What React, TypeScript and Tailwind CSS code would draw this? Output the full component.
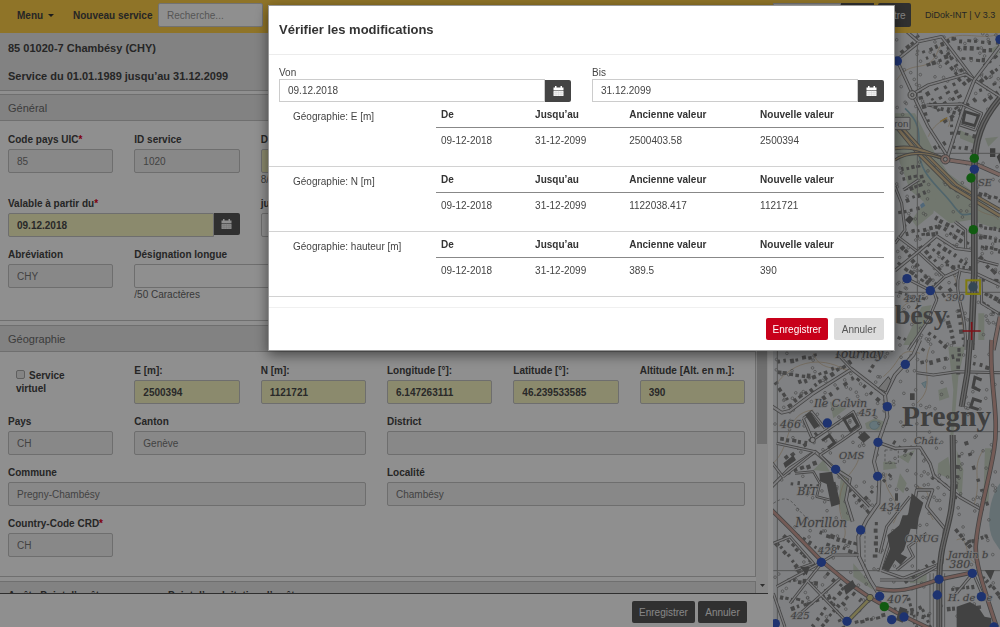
import { useState, type ReactNode } from 'react';

interface FieldProps {
  id: string;
  label: string;
  value?: string;
  required?: boolean;
  tone?: 'readonly' | 'changed' | 'plain';
  bold?: boolean;
  hint?: string;
  className?: string;
}

interface Change {
  name: string;
  from: string;
  to: string;
  oldValue: string;
  newValue: string;
}

const changes: Change[] = [
  { name: 'Géographie: E [m]', from: '09-12-2018', to: '31-12-2099', oldValue: '2500403.58', newValue: '2500394' },
  { name: 'Géographie: N [m]', from: '09-12-2018', to: '31-12-2099', oldValue: '1122038.417', newValue: '1121721' },
  { name: 'Géographie: hauteur [m]', from: '09-12-2018', to: '31-12-2099', oldValue: '389.5', newValue: '390' },
];

const tones = {
  readonly: 'bg-[#f2f2f2] text-[#777]',
  changed: 'bg-[#f8f6c3] text-[#4a4a4a]',
  plain: 'bg-white text-[#555]',
};

function CalendarIcon() {
  return (
    <svg width="11" height="11" viewBox="0 0 11 11" aria-hidden="true">
      <path d="M0.5 1.5H2V0h1.5v1.5h4V0H9v1.5h1.5V4h-10z" fill="#fff" />
      <path d="M0.5 4.6h10V10h-10z" fill="#f4f4f4" />
      <path d="M0.5 6.5h10M0.5 8.3h10M3 4.6V10M5.5 4.6V10M8 4.6V10" stroke="#ccc" strokeWidth="0.4" />
    </svg>
  );
}

function FieldLabel({ id, label, required }: { id: string; label: string; required?: boolean }) {
  return (
    <label htmlFor={id} className="block h-[15px] whitespace-nowrap font-bold leading-[15px] text-[#444]">
      {label}
      {required && <span className="text-[#e2001a]">*</span>}
    </label>
  );
}

function Field({ id, label, value = '', required, tone = 'readonly', bold, hint, className = '' }: FieldProps) {
  return (
    <div className={`min-w-0 ${className}`}>
      <FieldLabel id={id} label={label} required={required} />
      <input
        id={id}
        type="text"
        defaultValue={value}
        readOnly={tone === 'readonly'}
        className={`mt-[2px] block h-6 w-full rounded-xs border border-[#c4c4c4] px-2 outline-none ${tones[tone]} ${bold ? 'font-bold' : ''}`}
      />
      {hint && <p className="h-[13px] whitespace-nowrap leading-[13px] text-[#666]">{hint}</p>}
    </div>
  );
}

function DateField({ id, label, value, required, tone = 'plain', bold, className = '' }: FieldProps) {
  return (
    <div className={`min-w-0 ${className}`}>
      <FieldLabel id={id} label={label} required={required} />
      <div className="mt-[2px] flex items-start">
        <input
          id={id}
          type="text"
          defaultValue={value}
          className={`h-6 min-w-0 flex-1 rounded-l-xs border border-[#c4c4c4] px-2 outline-none ${tones[tone]} ${bold ? 'font-bold' : ''}`}
        />
        <button type="button" aria-label={`Calendrier ${label}`} className="flex h-[22px] w-[26px] items-center justify-center rounded-r-xs bg-[#565656]">
          <CalendarIcon />
        </button>
      </div>
    </div>
  );
}

function Panel({ title, children }: { title: string; children: ReactNode }) {
  return (
    <section className="mb-1 border-y border-r border-[#c6c6c6]">
      <h2 className="h-[26px] border-b border-[#c6c6c6] bg-[#e8e8e8] pl-2 text-[11px] leading-[26px] text-[#6c6c6c]">{title}</h2>
      <div className="grid grid-cols-6 gap-x-[21px] gap-y-[10px] pt-[11px] pr-[10px] pb-[19px] pl-2">{children}</div>
    </section>
  );
}

/* ---------- map ---------- */

// small deterministic generator, so the houses stay in place between renders
function makeRandom(seed: number) {
  let s = seed;
  return () => {
    s = (s * 16807) % 2147483647;
    return s / 2147483647;
  };
}

// x1, y1, x2, y2, number of houses
type HouseRow = [number, number, number, number, number];

const northRows: HouseRow[] = [
  [110, 60, 200, 20, 6], [120, 75, 180, 50, 4], [120, 95, 190, 70, 5], [40, 60, 90, 20, 4], [190, 60, 250, 140, 6],
  [185, 90, 235, 150, 5], [200, 20, 330, 30, 7], [215, 45, 310, 50, 6], [230, 75, 290, 80, 4], [290, 100, 340, 60, 4],
  [280, 150, 340, 100, 5], [105, 175, 130, 260, 5], [130, 180, 160, 230, 4], [155, 170, 190, 230, 4], [180, 160, 215, 220, 4],
  [205, 150, 235, 210, 4], [130, 215, 220, 240, 6], [280, 170, 340, 150, 4], [290, 210, 340, 170, 4], [215, 300, 260, 310, 3],
  [200, 340, 255, 350, 4], [140, 350, 170, 330, 3], [200, 260, 205, 320, 4], [45, 410, 90, 400, 4], [50, 440, 100, 430, 4],
  [55, 470, 110, 450, 5], [60, 500, 110, 480, 4], [35, 540, 90, 530, 4], [60, 600, 145, 580, 6], [150, 555, 230, 600, 6],
  [160, 580, 240, 630, 6], [90, 610, 150, 600, 5], [50, 640, 95, 690, 5], [40, 690, 80, 720, 3], [110, 640, 160, 700, 5],
  [130, 635, 200, 700, 6], [160, 635, 240, 690, 6], [90, 700, 165, 765, 6], [75, 715, 140, 760, 5], [180, 700, 250, 705, 5],
  [280, 580, 340, 590, 5], [280, 610, 340, 620, 5], [285, 640, 340, 650, 5], [285, 670, 330, 720, 5], [300, 780, 340, 800, 4],
  [290, 810, 340, 840, 4], [40, 780, 110, 800, 5], [150, 800, 205, 760, 4], [190, 850, 210, 930, 6], [225, 830, 240, 940, 6],
  [130, 900, 180, 940, 4], [40, 910, 110, 950, 5], [280, 480, 340, 500, 5], [290, 740, 345, 745, 4], [170, 270, 260, 200, 5],
];

const southRows: HouseRow[] = [
  [20, 60, 130, 40, 7], [20, 90, 110, 100, 6], [20, 120, 70, 200, 6], [80, 120, 180, 80, 6], [50, 190, 130, 130, 6],
  [140, 120, 230, 60, 6], [260, 110, 340, 180, 5], [290, 90, 310, 60, 3], [450, 60, 540, 40, 5], [150, 170, 240, 110, 5],
  [30, 290, 100, 300, 5], [40, 350, 130, 280, 6], [140, 370, 60, 400, 5], [60, 420, 140, 430, 5], [240, 440, 290, 500, 5],
  [150, 570, 250, 600, 7], [170, 600, 250, 630, 6], [80, 580, 150, 620, 5], [20, 600, 100, 690, 8], [40, 580, 130, 660, 8],
  [50, 710, 130, 720, 6], [30, 760, 110, 780, 6], [60, 800, 170, 760, 7], [120, 850, 210, 740, 8], [150, 850, 220, 770, 7],
  [170, 690, 270, 770, 6], [170, 740, 220, 850, 6], [320, 540, 320, 640, 6], [370, 800, 470, 820, 7], [420, 770, 440, 850, 6],
  [450, 790, 480, 850, 5], [530, 800, 620, 790, 7], [540, 740, 600, 730, 5], [640, 700, 690, 760, 6], [590, 600, 640, 580, 5],
  [570, 340, 560, 460, 5], [590, 300, 650, 480, 6], [560, 560, 600, 610, 5], [250, 840, 330, 820, 6], [280, 470, 350, 400, 5],
  [370, 300, 420, 330, 4], [490, 400, 540, 440, 4], [400, 720, 480, 660, 5], [610, 60, 645, 70, 3], [570, 20, 570, 90, 5],
];

function Houses({ rows, seed }: { rows: HouseRow[]; seed: number }) {
  const rnd = makeRandom(seed);
  return (
    <g fill="#808080">
      {rows.flatMap(([x1, y1, x2, y2, n], r) => {
        const angle = (Math.atan2(y2 - y1, x2 - x1) * 180) / Math.PI;
        return Array.from({ length: n }, (_, i) => {
          const x = x1 + ((x2 - x1) * i) / (n - 1) + rnd() * 4;
          const y = y1 + ((y2 - y1) * i) / (n - 1) + rnd() * 8;
          const w = 7 + rnd() * 6;
          return <rect key={`${r}-${i}`} x={x} y={y} width={w} height={8 + rnd() * 6} transform={`rotate(${angle} ${x} ${y})`} />;
        });
      })}
    </g>
  );
}

function Trees({ x, y, width, height, count, seed }: { x: number; y: number; width: number; height: number; count: number; seed: number }) {
  const rnd = makeRandom(seed);
  return (
    <g fill="none" stroke="#868686" strokeWidth="2">
      {Array.from({ length: count }, (_, i) => (
        <circle key={i} cx={x + rnd() * width} cy={y + rnd() * height} r="4" />
      ))}
    </g>
  );
}

function Road({ d, width = 9, fill = '#dcdcdf' }: { d: string; width?: number; fill?: string }) {
  return (
    <g fill="none" strokeLinejoin="round">
      <path d={d} stroke="#7c7c7c" strokeWidth={width + 5} />
      <path d={d} stroke={fill} strokeWidth={width} />
    </g>
  );
}

const northStops = [[37, 93], [345, 28], [268, 418], [66, 746], [136, 782]];
const northOpen = [[268, 385], [258, 444], [265, 599]];
const southStops = [
  [406, 73], [352, 200], [172, 249], [324, 307], [197, 388], [323, 409], [272, 570], [154, 667], [507, 718], [607, 700],
  [502, 765], [634, 770], [329, 769], [402, 831], [365, 839], [231, 844], [16, 851], [672, 861],
];

function NorthMap() {
  return (
    <g transform="translate(885 30) scale(0.3333)">
      <g fill="#c9d4c4">
        <path d="M30 250l60 0 30 60 30 60 40 60 80 60 75 70v40l-90-30-60 10-50-40-70-60-45-120z" />
        <path d="M225 300l40 20 10 25-50-20zM300 325l40-5-30 30zM280 850h18v80h-18zM110 830l30-5-20 60-40 60h-25z" />
        <path d="M130 500l25-10-10 60-50 40-15-20zM310 60l30-15v30zM300 570l40-10v15l-40 10z" />
      </g>
      <g fill="none" stroke="#cbb594" strokeWidth="2">
        <path d="M35 150C80 80 130 140 160 60S300 40 340 10M130 320c20-50 80-70 60-30M200 720c30 60 20 120 40 200M40 850c30-60 80-20 100-70M280 540c30 20 50 10 60 30" />
      </g>
      <path d="M60 235C120 290 95 330 105 385S170 480 200 520s30 38 65 30" fill="none" stroke="#8fb4c0" strokeWidth="5" />
      <path d="M105 525l10-8 6 10-12 8z" fill="#8fb8d8" />
      <Trees x={35} y={10} width={310} height={250} count={70} seed={31} />
      <Trees x={35} y={390} width={310} height={560} count={150} seed={77} />
      <Houses rows={northRows} seed={11} />
      <path d="M315 355h16v26h-16zM335 380l10-12v35zM60 570l14-14 12 10-12 16z" fill="#6f6f6f" />
      <path d="M240 245l40 12-10 30-36-10z" fill="none" stroke="#747474" strokeWidth="9" />
      <path d="M97 0V960M30 370H345M30 787H345" stroke="#999" strokeWidth="3" />

      <Road d="M60 0L100 35 170 20 268 150 345 200" width={5} />
      <Road d="M35 90L100 38" width={5} />
      <Road d="M38 95L84 195 130 290 185 375" width={5} />
      <Road d="M84 192L130 165 242 133 268 150" width={5} />
      <Road d="M345 48L268 150 240 220 188 380" width={6} />
      <Road d="M125 225L230 222 290 250 270 300 225 285" width={4} />
      <Road d="M30 470L50 520 60 600 30 640M55 480L100 450" width={4} />
      <Road d="M38 620L100 667 180 740 136 782 66 746" width={4} />
      <Road d="M30 722L100 665 155 618 212 655 265 662" width={5} />
      <Road d="M180 740L225 720 265 727 345 765" width={6} />
      <Road d="M225 722C200 800 250 840 240 960M146 782L155 810 130 870 70 960" width={4} />
      <Road d="M210 575L242 600V655M282 690L340 705M288 745L290 820 340 850" width={4} />

      <Road d="M30 285L100 370 200 470 345 558" width={8} fill="#d9c096" />
      <Road d="M48 290L120 370 215 465 345 540" width={6} fill="#d9c096" />
      <Road d="M30 355C90 345 130 370 181 388" width={7} fill="#d9c096" />
      <Road d="M30 390C60 370 110 360 181 388" width={4} fill="#d9c096" />
      <Road d="M190 390L270 402 345 435" width={9} fill="#dcb6ae" />
      <Road d="M345 860L325 960" width={9} fill="#dcb6ae" />

      <g fill="none" stroke="#777">
        <path d="M345 205C290 270 268 330 268 420V730L258 960" strokeWidth="20" />
        <path d="M345 205C290 270 268 330 268 420V730L258 960" strokeWidth="12" stroke="#b4b4b4" />
        <path d="M345 205C290 270 268 330 268 420V730L258 960" strokeWidth="4" />
      </g>
      <g fill="#dedede" stroke="#777" strokeWidth="3">
        <circle cx="82" cy="195" r="13" />
        <circle cx="82" cy="195" r="5" />
        <circle cx="181" cy="388" r="14" fill="#dcb6ae" />
        <circle cx="181" cy="388" r="6" />
      </g>
      <path d="M165 275l22-12" stroke="#e0b860" strokeWidth="4" />

      <g fill="#757575">
        <rect x="0" y="262" width="75" height="37" rx="3" fill="#e6e6e6" stroke="#888" strokeWidth="3" />
        <text x="70" y="291" textAnchor="end" fontSize="29" className="font-['Liberation_Sans',sans-serif]">ron</text>
        <g fontSize="30" fontStyle="italic" className="font-['DejaVu_Serif',serif]" stroke="#d4d4d6" strokeWidth="4" paintOrder="stroke">
          <text x="279" y="468">SE</text>
          <text x="56" y="815">421</text>
          <text x="182" y="814">390</text>
        </g>
        <text x="188" y="882" textAnchor="end" fontSize="84" className="font-['Liberation_Serif',serif] font-bold">bésy</text>
      </g>

      <g fill="#375bc8">{northStops.map(([x, y]) => <circle key={`${x}-${y}`} cx={x} cy={y} r="14" />)}</g>
      <g fill="#1fa31f">{northOpen.map(([x, y]) => <circle key={`${x}-${y}`} cx={x} cy={y} r="14" />)}</g>
      <circle cx="264" cy="771" r="14" fill="#5f7f94" />
      <rect x="244" y="751" width="41" height="41" fill="none" stroke="#e4dc1e" strokeWidth="6" />
      <path d="M260 876V931M233 903H287" stroke="#e0202c" strokeWidth="5" />
    </g>
  );
}

function SouthMap() {
  return (
    <g transform="translate(770 340) scale(0.3333)">
      <g fill="#c9d4c4">
        <path d="M535 20h50l-20 90-15 180-10 10 10-150zM505 150l25-8 8 30-30 10zM505 370l30-20 12 70-45-20z" />
        <path d="M340 365l35 0 5 20-40 5zM385 350l50-20-20 40zM285 250l30-15 40 15-30 22-35-5zM560 330l20 60-5 80-15-20zM645 325h20l-10 170-15-10z" />
        <path d="M215 390l25 20-15 70 25 60-30 5-15-60zM130 390l30-30 20 35zM250 670l50 60 10 20-60-40zM390 400l20 30-10 30-20-20zM420 700h50v30h-50z" />
        <path d="M180 185l50 20-40 30z" />
      </g>
      <path d="M690 430c-30 40-45 120-20 170l20 30z" fill="#b4c8cd" />
      <path d="M300 250c15-15 35 0 25 12s-30 5-25-12zM455 130l14-6-4 20zM590 645l10 0v12z" fill="#b4d2dc" stroke="#8fb4c0" strokeWidth="2" />
      <g fill="none" stroke="#cbb594" strokeWidth="2">
        <path d="M20 130C90 40 190 60 240 100M130 40c20 60 90 40 110 50M480 20c-30 70 20 120-40 170M640 330c-40 60 0 90-30 170M340 110C400 60 380 20 450 40M270 340c-10 60-50 60-60 130s30 90 10 130M440 440c60 10 20 60 50 100M10 370c60-60 30-150 120-160M350 400c-20 60 60 80 20 150M560 600c40-20 20 60 60 70" />
      </g>
      <Trees x={15} y={35} width={330} height={330} count={90} seed={5} />
      <Trees x={340} y={20} width={340} height={480} count={110} seed={19} />
      <Trees x={15} y={400} width={660} height={440} count={130} seed={51} />
      <Houses rows={southRows} seed={23} />
      <path d="M22 30V861M440 0V861M10 275H690M10 692H690" stroke="#999" strokeWidth="3" />

      <Road d="M450 0L430 45 375 105 345 165 352 230 325 307 312 365 328 425 325 490 290 540 265 590 267 650 300 720 325 760" width={7} />
      <Road d="M0 195L35 218 60 212 130 160 245 87 345 165" width={6} />
      <Road d="M200 40L245 87M440 98L490 105 560 95 690 98" width={4} />
      <Road d="M0 445L60 385 135 335 197 388 240 415 228 480 248 545" width={6} />
      <Road d="M20 310L135 335M135 335L40 410M0 360L40 412" width={4} />
      <Road d="M100 235L125 215 165 265M100 235L128 300 215 240 250 215 272 262 215 302 150 345 300 500" width={4} />
      <Road d="M75 400L130 395 150 430 140 470 180 480" width={3} />
      <Road d="M325 307L375 325 450 322 480 370 492 408 570 472 640 512" width={5} />
      <Road d="M330 695L360 600 430 510 440 450 488 450 470 500 524 565 515 670 400 715 330 690" width={5} />
      <Road d="M330 640L350 560 420 470M380 690L430 650 415 620 470 580" width={4} />
      <Road d="M154 667L190 645 267 645M10 610L60 590 130 670 75 690M20 740L154 667" width={4} />
      <Road d="M10 760L45 861M110 720L230 845M210 715L80 830M155 670L130 700 60 790" width={4} />
      <Road d="M500 680L430 720 330 720M550 770L610 700 640 770M600 710L560 760" width={4} />

      <g fill="none" stroke="#777">
        <path d="M600 0L592 100 575 200M548 285L550 430C550 550 508 600 508 715V861" strokeWidth="18" />
        <path d="M600 0L592 100 575 200M548 285L550 430C550 550 508 600 508 715V861" strokeWidth="11" stroke="#b8b8b8" />
        <path d="M600 0L592 100 575 200M548 285L550 430C550 550 508 600 508 715V861" strokeWidth="3" />
        <path d="M480 700V861M490 700V861M524 700V861" strokeWidth="2" />
        <path d="M10 490c60-40 60 20 110 50M285 560v120M345 330h40v40h-40z" strokeWidth="2" strokeDasharray="8 6" />
      </g>

      <Road d="M300 775L232 845" width={8} fill="#dbd38e" />
      <Road d="M0 505L60 565 154 662 230 725 300 773 380 818 480 866" width={8} fill="#cfa299" />
      <Road d="M318 745C400 765 450 735 510 718L610 697" width={8} fill="#cfa299" />
      <Road d="M665 0C655 120 690 220 672 330S625 520 618 610C612 660 640 740 680 861" width={9} fill="#cfa299" />
      <circle cx="300" cy="773" r="10" fill="#dbd38e" stroke="#777" strokeWidth="3" />
      <circle cx="128" cy="300" r="8" fill="#e4e4e6" stroke="#777" strokeWidth="3" />

      <g fill="#777">
        <path d="M105 225l16-10 28 42-16 10zM263 292l20-18 18 18-20 16zM148 400l38-5 6 32 18 65-26 8-14-68-20-8zM178 428l18-3 14 62-24 10z" />
        <path d="M425 460l35 28-14 46-4 34-20 -2-20 64 -10 12 20 10-20 22-16-14-20 34-20-8 24-60-8-40 36-30 10-30 16 0z" />
        <path d="M560 800l40-14 24 14 20 30 20 4v27H560zM644 690h30l-12 30zM390 800l22 8-14 40-20-8zM220 740l28-20 10 20-30 24zM90 680l30 0-10 26zM40 370l30-24 8 14-32 24z" />
        <path d="M420 160h14v20h-14zM375 460h9v22h-9z" />
      </g>
      <g fill="none" stroke="#777" strokeWidth="9">
        <path d="M222 238l24-14 18 32-22 16zM156 302l22-16 16 22-20 16M635 120l-20-8-6 30 22 10M635 185l-25-8-8 24 24 8" />
      </g>
      <path d="M325 145l30-35 8 12-15 34z" fill="#d0d0d0" stroke="#777" strokeWidth="3" />

      <g fill="#707070">
        <g fontSize="30" fontStyle="italic" className="font-['DejaVu_Serif',serif]" stroke="#d4d4d6" strokeWidth="4" paintOrder="stroke">
          <text x="192" y="54" fontSize="36">Tournay</text>
          <text x="132" y="200" fontSize="33">Ile Calvin</text>
          <text x="266" y="227">451</text>
          <text x="30" y="265" fontSize="33">466</text>
          <text x="207" y="356">OMS</text>
          <text x="82" y="465" fontSize="33">BIT</text>
          <text x="432" y="313">Chât.</text>
          <text x="330" y="513" fontSize="33">434</text>
          <text x="76" y="560" fontSize="36">Morillon</text>
          <text x="406" y="605">ONUG</text>
          <text x="144" y="643">428</text>
          <text x="534" y="654">Jardin b</text>
          <text x="538" y="684" fontSize="33">380</text>
          <text x="352" y="788" fontSize="33">407</text>
          <text x="534" y="782">H. de Ge</text>
          <text x="62" y="836">425</text>
        </g>
        <text x="396" y="258" fontSize="88" className="font-['Liberation_Serif',serif] font-bold">Pregny</text>
      </g>

      <g fill="#375bc8">{southStops.map(([x, y]) => <circle key={`${x}-${y}`} cx={x} cy={y} r="14" />)}</g>
      <circle cx="343" cy="800" r="14" fill="#1fa31f" />
    </g>
  );
}

function StationMap() {
  return (
    <svg viewBox="773 33 227 594" preserveAspectRatio="xMinYMin slice" className="h-full w-full bg-[#e4e6e9]" role="img" aria-label="Carte">
      <NorthMap />
      <SouthMap />
    </svg>
  );
}

/* ---------- dialog ---------- */

function ReviewDialog({ onClose }: { onClose: () => void }) {
  return (
    <div className="fixed inset-0 flex items-start bg-black/44 pt-[5px] pr-[105px] pl-[268px]">
      <div role="dialog" aria-modal="true" aria-labelledby="dialog-title" className="w-full border border-black/40 bg-white text-[#444] shadow-[0_4px_12px_rgba(0,0,0,0.5)]">
        <h1 id="dialog-title" className="h-[49px] border-b border-[#ececec] pl-[10px] text-[13px] font-bold leading-[48px] text-[#333]">
          Vérifier les modifications
        </h1>
        <div className="grid grid-cols-2 gap-x-[21px] px-[10px] pt-[11px]">
          {[
            { id: 'von', label: 'Von', value: '09.12.2018' },
            { id: 'bis', label: 'Bis', value: '31.12.2099' },
          ].map((f) => (
            <div key={f.id}>
              <label htmlFor={f.id} className="block leading-[13px]">{f.label}</label>
              <div className="flex items-end">
                <input id={f.id} type="text" defaultValue={f.value} className="h-[23px] min-w-0 flex-1 border border-[#ccc] px-2 outline-none" />
                <button type="button" aria-label={`Calendrier ${f.label}`} className="flex h-[22px] w-[26px] items-center justify-center rounded-r-xs bg-[#444]">
                  <CalendarIcon />
                </button>
              </div>
            </div>
          ))}
        </div>
        {changes.map((c) => (
          <div key={c.name} className="flex h-[65px] border-b border-[#d2d2d2] pr-[10px] pl-6">
            <p className="w-[143px] shrink-0 pt-2 leading-[13px]">{c.name}</p>
            <table className="h-[51px] w-full table-fixed text-left">
              <thead>
                <tr className="h-[25px] border-b border-[#888] text-[#333]">
                  <th className="w-[21%] pl-[5px]">De</th>
                  <th className="w-[21%] pl-[5px]">Jusqu’au</th>
                  <th className="w-[29%] pl-[5px]">Ancienne valeur</th>
                  <th className="w-[29%] pl-[6px]">Nouvelle valeur</th>
                </tr>
              </thead>
              <tbody>
                <tr className="h-[26px]">
                  <td className="pl-[5px]">{c.from}</td>
                  <td className="pl-[5px]">{c.to}</td>
                  <td className="pl-[5px]">{c.oldValue}</td>
                  <td className="pl-[6px]">{c.newValue}</td>
                </tr>
              </tbody>
            </table>
          </div>
        ))}
        <div className="mt-[10px] flex justify-end gap-[6px] border-t border-[#f0f0f0] px-[10px] py-[10px]">
          <button type="button" onClick={onClose} className="h-[22px] w-[62px] rounded-xs bg-[#c8001a] text-white">Enregistrer</button>
          <button type="button" onClick={onClose} className="h-[22px] w-[50px] rounded-xs bg-[#dcdcdc] text-[#555]">Annuler</button>
        </div>
      </div>
    </div>
  );
}

export default function App() {
  const [open, setOpen] = useState(true);

  return (
    <div className="flex h-screen flex-col overflow-hidden bg-white font-['Liberation_Sans',Arial,sans-serif] text-[10px] text-[#444]">
      <header className="flex h-[33px] shrink-0 items-start bg-[#ffcf48] pt-[3px] pl-[17px] font-bold">
        <button type="button" className="flex h-6 w-14 items-center gap-[5px]">
          Menu
          <svg width="6" height="3" viewBox="0 0 6 3" aria-hidden="true"><path d="M0 0h6L3 3z" fill="#333" /></svg>
        </button>
        <button type="button" className="h-6 w-[85px] whitespace-nowrap text-left">Nouveau service</button>
        <input type="text" aria-label="Recherche" placeholder="Recherche..." className="h-6 w-[105px] rounded-xs border border-[#ccc] bg-white px-2 font-normal outline-none placeholder:text-[#999]" />
        <div className="ml-auto flex font-normal">
          <input type="text" aria-label="Coordonnées" className="h-6 w-[68px] border border-[#ccc] bg-white px-2 outline-none" />
          <button type="button" aria-label="Chercher" className="h-6 w-[33px] bg-[#565656]" />
          <button type="button" className="ml-1 h-6 w-[33px] rounded-xs bg-[#565656] text-[#eee]">Filtre</button>
          <span className="w-[89px] whitespace-nowrap pl-[14px] text-[9px] leading-6">DiDok-INT | V 3.3</span>
        </div>
      </header>

      <main className="grid min-h-0 flex-1 grid-cols-[773fr_227fr]">
        <div className="flex min-h-0 min-w-0 flex-col pr-[5px]">
          <div className="h-[58px] shrink-0 border-b border-[#c6c6c6] bg-[#e8e8e8] pt-px pl-2 text-[11px] font-bold">
            <p className="leading-7">85 01020-7 Chambésy (CHY)</p>
            <p className="leading-7">Service du 01.01.1989 jusqu’au 31.12.2099</p>
          </div>
          <div className="flex min-h-0 flex-1">
            <div className="min-w-0 flex-1 overflow-hidden pt-[3px]">
              <Panel title="Général">
                <Field id="uic" label="Code pays UIC" value="85" required />
                <Field id="service-id" label="ID service" value="1020" />
                <Field id="designation" label="Désignation" value="Chambésy" tone="changed" hint="8/30" className="col-span-3" />
                <DateField id="valid-from" label="Valable à partir du" value="09.12.2018" required tone="changed" bold className="col-span-2" />
                <DateField id="valid-to" label="jusqu’au" value="31.12.2099" className="col-span-2" />
                <Field id="abbr" label="Abréviation" value="CHY" className="col-start-1" />
                <Field id="long-name" label="Désignation longue" tone="plain" hint="/50 Caractères" className="col-span-3" />
              </Panel>
              <Panel title="Géographie">
                <label className="pt-[6px] pr-6 pl-2 font-bold leading-[13px]">
                  <input type="checkbox" className="mr-1 h-[9px] w-[9px] appearance-none rounded-xs border border-[#aaa] bg-[#ececec]" />
                  Service virtuel
                </label>
                <Field id="e" label="E [m]:" value="2500394" tone="changed" bold />
                <Field id="n" label="N [m]:" value="1121721" tone="changed" bold />
                <Field id="lng" label="Longitude [°]:" value="6.147263111" tone="changed" bold />
                <Field id="lat" label="Latitude [°]:" value="46.239533585" tone="changed" bold />
                <Field id="alt" label="Altitude [Alt. en m.]:" value="390" tone="changed" bold />
                <Field id="country" label="Pays" value="CH" />
                <Field id="canton" label="Canton" value="Genève" className="col-span-2" />
                <Field id="district" label="District" className="col-span-3" />
                <Field id="commune" label="Commune" value="Pregny-Chambésy" className="col-span-3" />
                <Field id="locality" label="Localité" value="Chambésy" className="col-span-3" />
                <Field id="crd" label="Country-Code CRD" value="CH" required />
              </Panel>
              <div className="flex h-10 border-t border-r border-[#c6c6c6] bg-[#e8e8e8] pt-[6px] pl-2 font-bold">
                <span className="w-40">Arrêts Point d’arrêt</span>
                <span>Point d’exploitation d’arrêt</span>
              </div>
            </div>
            <div className="flex w-3 flex-col items-center bg-[#f3f3f3]" aria-hidden="true">
              <div className="h-[353px] w-[10px] bg-[#c6c6c6]" />
              <svg width="5" height="3" viewBox="0 0 5 3" className="mt-auto mb-[6px]"><path d="M0 0h5L2.5 3z" fill="#555" /></svg>
            </div>
          </div>
          <footer className="flex h-[34px] shrink-0 gap-[3px] border-t border-[#555] pt-[7px] pr-[21px]">
            <button type="button" className="ml-auto h-[22px] w-[63px] rounded-xs bg-[#565656] text-[#eee]">Enregistrer</button>
            <button type="button" className="h-[22px] w-[49px] rounded-xs bg-[#565656] text-[#eee]">Annuler</button>
          </footer>
        </div>
        <div className="min-h-0 overflow-hidden">
          <StationMap />
        </div>
      </main>

      {open && <ReviewDialog onClose={() => setOpen(false)} />}
    </div>
  );
}
